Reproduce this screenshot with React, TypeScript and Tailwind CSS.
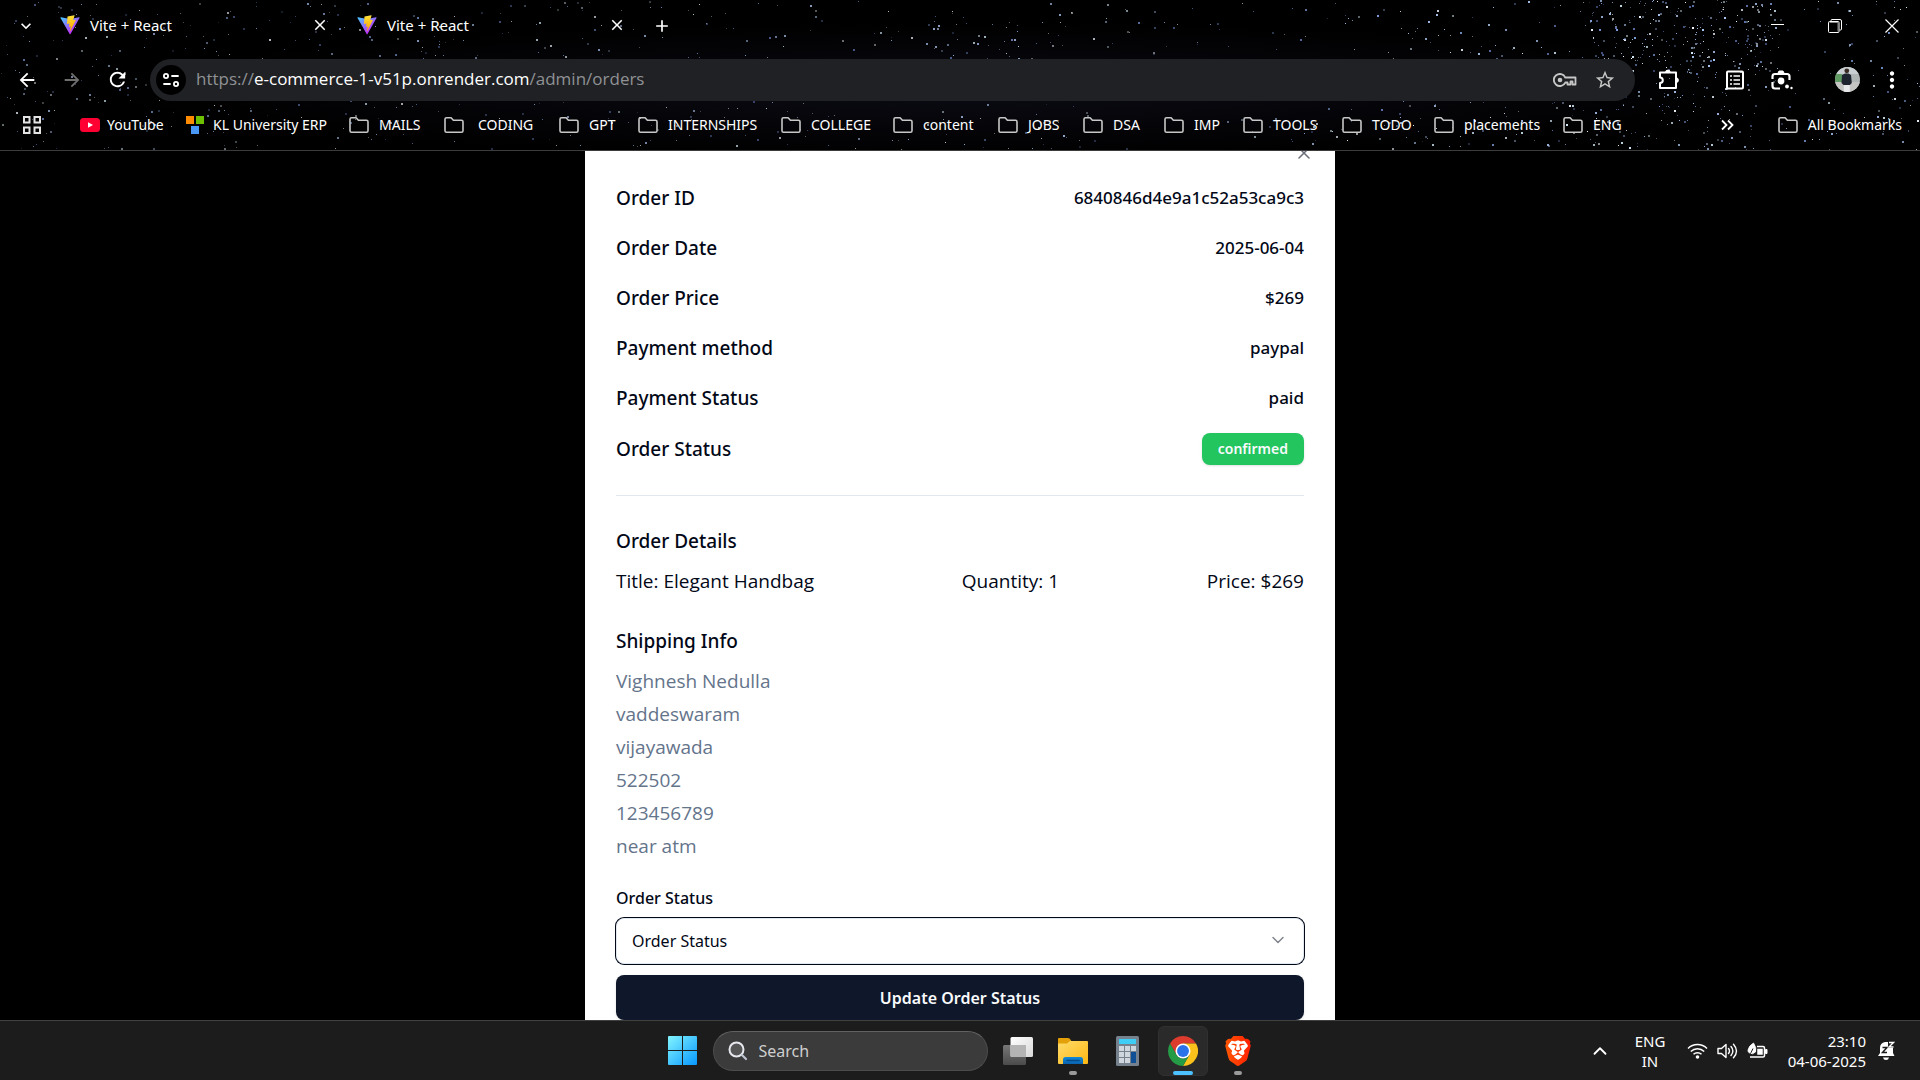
import React from "react";
import { ChevronDown, ChevronUp, X } from "lucide-react";
import { MdOutlineStarBorder, MdMoreVert, MdArrowBack, MdArrowForward, MdClose, MdAdd, MdKeyboardArrowDown, MdRefresh } from "react-icons/md";
import { SiBrave } from "react-icons/si";

type Star = { x: number; y: number; s: number; c: string; o: number };

function makeStars(): Star[] {
  let seed = 90210;
  const rnd = () => {
    seed = (seed * 1664525 + 1013904223) % 4294967296;
    return seed / 4294967296;
  };
  const tones = ["#7c9bd6", "#a9c4ee", "#eef6ff", "#5a6fa6", "#9fb9dc", "#cfe6f2"];
  const stars: Star[] = [];
  const scatter = (n: number, x0: number, x1: number, y0: number, y1: number, bright: number) => {
    for (let i = 0; i < n; i++) {
      stars.push({
        x: Math.round(x0 + rnd() * (x1 - x0)),
        y: Math.round(y0 + rnd() * (y1 - y0)),
        s: rnd() > 0.55 ? 2 : 1,
        c: tones[Math.floor(rnd() * tones.length)],
        o: Math.min(1, bright * (0.3 + rnd() * 0.7)),
      });
    }
  };
  scatter(400, 0, 660, 0, 150, 0.75);
  scatter(220, 660, 1300, 0, 150, 0.85);
  scatter(40, 920, 1060, 10, 60, 1);
  scatter(420, 1300, 1920, 0, 150, 1);
  scatter(210, 1590, 1780, 0, 70, 1.1);
  scatter(140, 1500, 1760, 50, 150, 1);
  return stars;
}

const STARS = makeStars();

function Sky() {
  return (
    <svg className="absolute inset-0 h-full w-full" viewBox="0 0 1920 150" preserveAspectRatio="xMidYMid slice" aria-hidden="true">
      <defs>
        <radialGradient id="haze" cx="0.5" cy="0.6" r="0.45">
          <stop offset="0" stopColor="#0b0b14" />
          <stop offset="1" stopColor="#000000" />
        </radialGradient>
      </defs>
      <rect width="1920" height="150" fill="url(#haze)" />
      {STARS.map((s, i) => (
        <rect key={i} x={s.x} y={s.y} width={s.s} height={s.s} fill={s.c} opacity={s.o} />
      ))}
    </svg>
  );
}

function ViteLogo() {
  return (
    <svg className="h-5 w-5 shrink-0" viewBox="0 0 410 404" aria-hidden="true">
      <defs>
        <linearGradient id="viteBody" x1="6" y1="33" x2="235" y2="344" gradientUnits="userSpaceOnUse">
          <stop stopColor="#41D1FF" />
          <stop offset="1" stopColor="#BD34FE" />
        </linearGradient>
        <linearGradient id="viteBolt" x1="194" y1="9" x2="236" y2="293" gradientUnits="userSpaceOnUse">
          <stop stopColor="#FFEA83" />
          <stop offset="0.083" stopColor="#FFDD35" />
          <stop offset="1" stopColor="#FFA800" />
        </linearGradient>
      </defs>
      <path fill="url(#viteBody)" d="M399.641 59.5246L215.643 388.545C211.844 395.338 202.084 395.378 198.228 388.618L10.5817 59.5563C6.38087 52.1896 12.6802 43.2665 21.0281 44.7586L205.223 77.6824C206.398 77.8924 207.601 77.8904 208.776 77.6763L389.119 44.8058C397.439 43.2894 403.768 52.1434 399.641 59.5246Z" />
      <path fill="url(#viteBolt)" d="M292.965 1.5744L156.801 28.2552C154.563 28.6937 152.906 30.5903 152.771 32.8664L144.395 174.33C144.198 177.662 147.258 180.248 150.51 179.498L188.42 170.749C191.967 169.931 195.172 173.055 194.443 176.622L183.18 231.775C182.422 235.487 185.907 238.661 189.532 237.56L212.947 230.446C216.577 229.344 220.065 232.527 219.297 236.242L201.398 322.875C200.278 328.294 207.486 331.249 210.492 326.603L212.5 323.5L323.454 102.072C325.312 98.3645 322.108 94.137 318.036 94.9228L279.014 102.454C275.347 103.161 272.227 99.746 273.262 96.1583L298.731 7.86689C299.767 4.27314 296.636 0.855181 292.965 1.5744Z" />
    </svg>
  );
}

function FolderOutline() {
  return (
    <svg className="h-5 w-5 shrink-0" viewBox="0 0 20 20" fill="none" stroke="#c7c7c7" strokeWidth="1.6" strokeLinejoin="round" aria-hidden="true">
      <path d="M1 4.200c0-.9.6-1.500 1.500-1.500h4.600l2.300 2.600h8.100c.9 0 1.500.6 1.500 1.500v8.900c0 .9-.6 1.500-1.500 1.500h-15c-.9 0-1.500-.6-1.500-1.500z" />
    </svg>
  );
}

function YouTubeIcon() {
  return (
    <svg className="h-5 w-5 shrink-0" viewBox="0 0 20 20" aria-hidden="true">
      <rect x="0" y="3" width="20" height="14" rx="3.500" fill="#ff0033" />
      <path d="M8 7.200v5.600l5-2.800z" fill="#fff" />
    </svg>
  );
}

function ErpIcon() {
  return (
    <svg className="h-5 w-5 shrink-0" viewBox="0 0 20 20" aria-hidden="true">
      <rect x="0" y="1" width="8" height="8" fill="#ff8c00" />
      <rect x="10" y="1" width="8" height="8" fill="#6cc000" />
      <rect x="5" y="11" width="8" height="8" fill="#4a98f5" />
    </svg>
  );
}

function Tab({ title, className }: { title: string; className: string }) {
  return (
    <div className={"flex items-center " + className}>
      <ViteLogo />
      <span className="ml-2.5 flex-1 text-[15px]">{title}</span>
      <button aria-label="Close tab">
        <MdClose size={18} />
      </button>
    </div>
  );
}

const BOOKMARKS: { label: string; icon?: React.ReactNode; box: string; pad?: boolean }[] = [
  { label: "YouTube", icon: <YouTubeIcon />, box: "w-[106px]" },
  { label: "KL University ERP", icon: <ErpIcon />, box: "w-[163px]" },
  { label: "MAILS", box: "w-[95px]" },
  { label: "CODING", box: "w-[115px]", pad: true },
  { label: "GPT", box: "w-[79px]" },
  { label: "INTERNSHIPS", box: "w-[143px]" },
  { label: "COLLEGE", box: "w-[112px]" },
  { label: "content", box: "w-[105px]" },
  { label: "JOBS", box: "w-[85px]" },
  { label: "DSA", box: "w-[81px]" },
  { label: "IMP", box: "w-[79px]" },
  { label: "TOOLS", box: "w-[99px]" },
  { label: "TODO", box: "w-[92px]" },
  { label: "placements", box: "w-[129px]" },
  { label: "ENG", box: "w-[70px]" },
];

function BrowserHeader() {
  return (
    <header className="relative h-[151px] shrink-0 overflow-hidden border-b border-[#3c3c3c] bg-black text-sm text-white">
      <Sky />
      <div className="relative flex h-[51px] items-center pl-4">
        <button aria-label="Search tabs">
          <MdKeyboardArrowDown size={20} />
        </button>
        <Tab title="Vite + React" className="ml-6 w-[269px]" />
        <Tab title="Vite + React" className="ml-7 w-[269px]" />
        <button className="ml-[26px]" aria-label="New tab">
          <MdAdd size={20} />
        </button>
        <div className="ml-auto flex items-center">
          <button className="flex w-[57px] justify-center" aria-label="Minimize">
            <svg width="14" height="14" viewBox="0 0 14 14" stroke="#fff"><path d="M0 5.500h13" /></svg>
          </button>
          <button className="flex w-[57px] justify-center" aria-label="Restore">
            <svg width="14" height="14" viewBox="0 0 14 14" fill="none" stroke="#fff">
              <path d="M3 2.500V1.500q0-1 1-1h8q1.500 0 1.500 1.500v8q0 1-1 1h-1" />
              <rect x="0.500" y="2.500" width="10.500" height="11" rx="1" fill="#000" />
              <path d="M1.500 3.500h8.500v9" stroke="#8a8a8a" />
            </svg>
          </button>
          <button className="flex w-[57px] justify-center" aria-label="Close">
            <svg width="14" height="14" viewBox="0 0 14 14" stroke="#fff" strokeWidth="1.200"><path d="M.5.500l13 13M13.500.500l-13 13" /></svg>
          </button>
        </div>
      </div>

      <div className="relative flex h-[57px] items-center pl-4 pr-[15px]">
        <button className="w-[45px]" aria-label="Back"><MdArrowBack size={22} /></button>
        <button className="w-[45px] text-[#6f6f6f]" aria-label="Forward"><MdArrowForward size={22} /></button>
        <button className="w-11" aria-label="Reload"><MdRefresh size={23} /></button>
        <div className="flex h-[42px] flex-1 items-center rounded-full bg-[#202124] pl-1.5 pr-[19px]">
          <button className="flex h-[30px] w-[30px] items-center justify-center rounded-full bg-black" aria-label="View site information">
            <svg width="18" height="18" viewBox="0 0 18 18" fill="none" stroke="#fff" strokeWidth="1.800" strokeLinecap="round">
              <circle cx="4" cy="5" r="2.100" />
              <path d="M10 5h6M2 13h6" />
              <circle cx="14" cy="13" r="2.100" />
            </svg>
          </button>
          <div className="ml-2.5 flex-1 text-[17px] font-['Open_Sans',sans-serif] text-[#8f9195]">
            https://<span className="text-white">e-commerce-1-v51p.onrender.com</span>/admin/orders
          </div>
          <button className="mr-[17px]" aria-label="Saved passwords">
            <svg width="24" height="24" viewBox="0 0 24 24" fill="none" stroke="#c7c7c7" strokeWidth="1.800" strokeLinejoin="round">
              <path d="M12.300 9.500H22.500v7h-3v-3h-2v3h-3v-2h-2.200a6 6 0 1 1 0-5z" />
              <circle cx="7" cy="12" r="2.300" fill="#c7c7c7" stroke="none" />
            </svg>
          </button>
          <button aria-label="Bookmark this tab"><MdOutlineStarBorder size={22} className="text-[#c7c7c7]" /></button>
        </div>
        <button className="ml-[22px]" aria-label="Extensions">
          <svg width="24" height="24" viewBox="0 0 24 24" fill="none" stroke="#fff" strokeWidth="2" strokeLinejoin="round">
            <path d="M3 4.500h16V20H3v-5a2.800 2.800 0 0 0 0-5.600z" />
            <path d="M8.500 4.500a2.400 2.400 0 0 1 4.800 0zM19 9.800a2.400 2.400 0 0 1 0 4.800z" fill="#fff" strokeWidth="1" />
          </svg>
        </button>
        <button className="ml-[43px]" aria-label="Reading list">
          <svg width="22" height="22" viewBox="0 0 22 22" fill="none" stroke="#fff" strokeWidth="2">
            <rect x="3" y="2.500" width="16" height="17" rx="1" />
            <path d="M6 7h2M9.500 7H16M6 11h2M9.500 11H16M6 15h2M9.500 15H16" strokeWidth="1.700" />
          </svg>
        </button>
        <button className="ml-6" aria-label="Search with Lens">
          <svg width="23" height="22" viewBox="0 0 23 22" fill="none" stroke="#fff" strokeWidth="2.200">
            <path d="M2.500 10V7.500q0-2.500 2.500-2.500h12q2.500 0 2.500 2.500V11M2.500 13v4q0 2.500 2.500 2.500h5" />
            <path d="M8 4l1-2h4l1 2z" fill="#fff" strokeWidth="1" />
            <circle cx="11" cy="12" r="3.400" fill="#fff" stroke="none" />
            <circle cx="17" cy="17.500" r="1.900" fill="#fff" stroke="none" />
            <circle cx="21.500" cy="19" r="1.200" fill="#fff" stroke="none" />
          </svg>
        </button>
        <button className="ml-[42px]" aria-label="Profile">
          <svg width="25" height="25" viewBox="0 0 25 25">
            <clipPath id="face"><circle cx="12.500" cy="12.500" r="12.500" /></clipPath>
            <g clipPath="url(#face)">
              <rect width="25" height="25" fill="#aeb5b4" />
              <rect width="25" height="7" fill="#c9ced2" />
              <path d="M0 7h7v8H0z" fill="#5f9a63" />
              <rect y="15" width="25" height="10" fill="#c4c4c2" />
              <path d="M7 8l3-1.500h3.500l2.500 1.500.8 8-2 2H8.500l-2-2z" fill="#1d2430" />
              <path d="M8.800 18h6v7h-6z" fill="#e6e8ec" />
              <circle cx="11.800" cy="3.800" r="2.400" fill="#3a2b25" />
            </g>
          </svg>
        </button>
        <button className="ml-[19px]" aria-label="Menu"><MdMoreVert size={26} /></button>
      </div>

      <nav className="relative flex h-[34px] items-center pl-[23px] pr-[18px]">
        <button className="mr-[39px] shrink-0" aria-label="Apps">
          <svg width="18" height="18" viewBox="0 0 18 18" fill="none" stroke="#e3e3e3" strokeWidth="2">
            <rect x="1" y="1" width="5.500" height="5.500" />
            <rect x="11.500" y="1" width="5.500" height="5.500" />
            <rect x="1" y="11.500" width="5.500" height="5.500" />
            <rect x="11.500" y="11.500" width="5.500" height="5.500" />
          </svg>
        </button>
        {BOOKMARKS.map((b) => (
          <a key={b.label} href="#" className={"flex shrink-0 items-center whitespace-nowrap " + b.box}>
            {b.icon ?? <FolderOutline />}
            <span className={b.pad ? "ml-3.5" : b.icon ? "ml-[7px]" : "ml-2.5"}>{b.label}</span>
          </a>
        ))}
        <button className="ml-auto mr-11" aria-label="More bookmarks">
          <svg width="14" height="12" viewBox="0 0 14 12" fill="none" stroke="#fff" strokeWidth="1.800"><path d="M2 1.500L6.500 6 2 10.500M8 1.500L12.500 6 8 10.500" /></svg>
        </button>
        <a href="#" className="flex shrink-0 items-center whitespace-nowrap">
          <FolderOutline />
          <span className="ml-2.5">All Bookmarks</span>
        </a>
      </nav>
    </header>
  );
}

const ROWS: [string, string][] = [
  ["Order ID", "6840846d4e9a1c52a53ca9c3"],
  ["Order Date", "2025-06-04"],
  ["Order Price", "$269"],
  ["Payment method", "paypal"],
  ["Payment Status", "paid"],
];

const ADDRESS = ["Vighnesh Nedulla", "vaddeswaram", "vijayawada", "522502", "123456789", "near atm"];

function OrderDialog() {
  return (
    <section role="dialog" aria-label="Order details" className="relative w-full max-w-[750px] bg-white px-[31px] pt-8 text-[19px] leading-[30px] text-[#020817]">
      <button className="absolute -top-2 right-[21px] text-[#6b6f78]" aria-label="Close dialog">
        <X size={20} strokeWidth={1.8} />
      </button>
      <dl className="flex flex-col gap-5">
        {ROWS.map(([k, v]) => (
          <div key={k} className="flex items-center justify-between">
            <dt className="font-medium">{k}</dt>
            <dd className="text-[17px] leading-[30px] font-medium">{v}</dd>
          </div>
        ))}
        <div className="flex items-center justify-between">
          <dt className="font-medium">Order Status</dt>
          <dd className="flex h-8 items-center rounded-lg bg-[#22c55e] px-4 text-sm font-semibold text-slate-50 shadow-sm">confirmed</dd>
        </div>
      </dl>
      <hr className="mt-[30px] border-[#e2e8f0]" />

      <h2 className="mt-[30px] font-medium">Order Details</h2>
      <ul className="mt-2.5 font-['Open_Sans',sans-serif]">
        <li className="flex items-center justify-between">
          <span>Title: Elegant Handbag</span>
          <span>Quantity: 1</span>
          <span>Price: $269</span>
        </li>
      </ul>

      <h2 className="mt-[30px] font-medium">Shipping Info</h2>
      <div className="mt-2.5 flex flex-col gap-[3px] font-['Open_Sans',sans-serif] text-[#64748b]">
        {ADDRESS.map((line) => (
          <span key={line}>{line}</span>
        ))}
      </div>

      <form className="mt-[27px]" onSubmit={(e) => e.preventDefault()}>
        <label htmlFor="status" className="block text-base leading-5 font-medium">Order Status</label>
        <div className="relative mt-2.5">
          <select id="status" defaultValue="" className="block h-[46px] w-full appearance-none rounded-lg border border-[#e2e8f0] bg-white px-[15px] text-base ring-1 ring-[#020817] outline-none">
            <option value="">Order Status</option>
            <option value="confirmed">Confirmed</option>
            <option value="delivered">Delivered</option>
          </select>
          <ChevronDown size={20} strokeWidth={1.8} className="pointer-events-none absolute top-3 right-4 text-[#81858d]" />
        </div>
        <button type="submit" className="mt-[11px] block h-[45px] w-full rounded-lg bg-[#0f172a] text-base font-semibold text-slate-50 shadow">
          Update Order Status
        </button>
      </form>
    </section>
  );
}

function TaskButton({ label, active, open, children }: { label: string; active?: boolean; open?: boolean; children: React.ReactNode }) {
  return (
    <button
      aria-label={label}
      className={"relative flex h-[50px] w-[50px] items-center justify-center rounded-md " + (active ? "border border-[#303030] bg-[#2a2a2a]" : "")}
    >
      {children}
      {active && <span className="absolute bottom-0 h-1 w-5 rounded-full bg-[#4cc2ff]" />}
      {open && <span className="absolute bottom-px h-1 w-2 rounded-full bg-[#9a9a9a]" />}
    </button>
  );
}

function Taskbar() {
  return (
    <footer className="grid h-[60px] shrink-0 grid-cols-[1fr_auto_1fr] items-center border-t border-[#3f4042] bg-[#1c1c1c] text-white">
      <div />
      <div className="flex items-center gap-[5px]">
        <TaskButton label="Start">
          <svg width="29" height="29" viewBox="0 0 29 29">
            <defs>
              <linearGradient id="win" x1="0" y1="0" x2="29" y2="29" gradientUnits="userSpaceOnUse">
                <stop stopColor="#83f5ff" />
                <stop offset="1" stopColor="#0797ff" />
              </linearGradient>
            </defs>
            <path fill="url(#win)" d="M1 0h13v14H0V1q0-1 1-1zM15 0h13q1 0 1 1v13H15zM0 15h14v14H1q-1 0-1-1zM15 15h14v13q0 1-1 1H15z" />
          </svg>
        </TaskButton>
        <label className="flex h-10 w-[275px] items-center rounded-full border border-[#4c4c4c] border-t-[#616161] bg-[#3b3b3b] pl-3.5">
          <svg width="20" height="20" viewBox="0 0 20 20" fill="#555" stroke="#e6e8ee" strokeWidth="2" strokeLinecap="round">
            <circle cx="8.500" cy="8.500" r="7" />
            <path d="M14 14l4 4" stroke="#c0c6d4" strokeWidth="2.200" />
          </svg>
          <input type="text" placeholder="Search" aria-label="Search" className="ml-[11px] w-40 bg-transparent text-base outline-none placeholder:text-[#cfcfcf]" />
        </label>
        <TaskButton label="Task view">
          <svg width="30" height="28" viewBox="0 0 30 28">
            <defs>
              <linearGradient id="tv" x1="0" y1="0" x2="1" y2="1"><stop stopColor="#fff" /><stop offset="1" stopColor="#d9d9d9" /></linearGradient>
              <linearGradient id="tvb" x1="0" y1="0" x2="0" y2="1"><stop stopColor="#777" /><stop offset="1" stopColor="#4b4b4b" /></linearGradient>
            </defs>
            <rect x="0" y="8" width="23" height="20" rx="1.500" fill="url(#tvb)" />
            <rect x="7.500" y="0" width="22.500" height="20" rx="1.500" fill="url(#tv)" />
            <path d="M7.500 8H23v12H9q-1.500 0-1.500-1.500z" fill="#b4b4b4" />
          </svg>
        </TaskButton>
        <TaskButton label="File Explorer" open>
          <svg width="30" height="28" viewBox="0 0 30 28">
            <defs>
              <linearGradient id="fe" x1="0" y1="0" x2="1" y2="1"><stop stopColor="#ffdb6b" /><stop offset="1" stopColor="#fcb813" /></linearGradient>
              <linearGradient id="feb" x1="0" y1="0" x2="0" y2="1"><stop stopColor="#0f8ad8" /><stop offset="1" stopColor="#0b62ae" /></linearGradient>
            </defs>
            <path d="M0 2q0-1 1-1h9q1 0 2 1l2 3v4H0z" fill="#e3a008" />
            <path d="M0 6.500h9l3-2.500h17q1 0 1 1v21q0 1-1 1H1q-1 0-1-1z" fill="url(#fe)" />
            <path d="M5 27v-4.500q0-2.500 2.500-2.500h15q2.500 0 2.500 2.500V27z" fill="url(#feb)" />
            <path d="M9 23.500h12" stroke="#064a8c" strokeWidth="1.500" strokeLinecap="round" />
          </svg>
        </TaskButton>
        <TaskButton label="Calculator">
          <svg width="23" height="30" viewBox="0 0 23 30">
            <rect width="23" height="30" rx="1.500" fill="#75818c" />
            <rect x="3" y="3" width="17" height="5" fill="#3ecdf5" />
            <path d="M3 10h5v5H3zM9 10h5v5H9zM15 10h5v5h-5zM3 16h5v5H3zM9 16h5v5H9zM3 22h5v5H3zM9 22h5v5H9z" fill="#cfd6dd" />
            <rect x="15" y="16" width="5" height="11" fill="#0f4f96" />
          </svg>
        </TaskButton>
        <TaskButton label="Google Chrome" active>
          <svg width="30" height="30" viewBox="0 0 48 48">
            <path fill="#dc3b2e" d="M24 12h20.780a24 24 0 0 0-41.570.003L13.610 30l10.390-18z" />
            <path fill="#fbc21b" d="M34.390 30.010L24 48A24 24 0 0 0 44.790 12H24z" />
            <path fill="#259b46" d="M13.610 30.010L3.220 12.010A24 24 0 0 0 24.010 48L34.400 30.010a12 12 0 0 1-20.790 0z" />
            <circle cx="24" cy="24" r="12" fill="#fff" />
            <circle cx="24" cy="24" r="9.500" fill="#2a72ea" />
          </svg>
        </TaskButton>
        <TaskButton label="Brave" open>
          <svg width="30" height="30" viewBox="0 0 30 30">
            <defs>
              <linearGradient id="brave" x1="0" y1="0" x2="1" y2="0"><stop stopColor="#ff5601" /><stop offset="1" stopColor="#ff1f01" /></linearGradient>
            </defs>
            <path d="M9 3.500h12l5.500 6.500-3 12-8.500 4.500-8.500-4.500-3-12z" fill="#fff" />
            <SiBrave size={30} fill="url(#brave)" stroke="none" />
          </svg>
        </TaskButton>
      </div>

      <div className="flex items-center justify-end pr-[25px] text-sm leading-5">
        <button aria-label="Show hidden icons"><ChevronUp size={22} strokeWidth={2} /></button>
        <button className="ml-[22px] w-[34px] text-center text-[15px] leading-5">ENG<br />IN</button>
        <button className="ml-5 flex items-center gap-[9px]" aria-label="Network, volume, battery">
          <svg width="21" height="18" viewBox="0 0 21 18" fill="none" stroke="#fff" strokeWidth="1.500">
            <path d="M1 6.500a13.500 13.500 0 0 1 19 0M3.800 9.500a9.500 9.500 0 0 1 13.400 0M6.500 12.300a5.700 5.700 0 0 1 8 0" />
            <circle cx="10.500" cy="15" r="1.800" fill="#fff" stroke="none" />
          </svg>
          <svg width="21" height="18" viewBox="0 0 21 18" fill="none" stroke="#fff" strokeWidth="1.400" strokeLinejoin="round" strokeLinecap="round">
            <path d="M1 6.500h3.500L9 2.500v13L4.500 11.500H1zM11.500 6.500q2 2.500 0 5M14 4.500q3.800 4.500 0 9M16.500 2.200q6 6.800 0 13.600" />
          </svg>
          <svg width="21" height="18" viewBox="0 0 21 18" fill="none" stroke="#fff" strokeWidth="1.500">
            <path d="M10 4.500h6q1.500 0 1.500 1.500v7.500q0 1.500-1.500 1.500H3" />
            <path d="M18.500 7.500h1.500v4h-1.500z" fill="#fff" strokeWidth="1" />
            <path d="M11 7.500h4v4.500h-4z" fill="#fff" />
            <path d="M1 8Q2 3.500 6.500 1q3.500 5 2 9-3 3-6 1Q.5 10 1 8z" fill="#fff" strokeWidth="0.800" />
            <path d="M1 14Q4.500 11 6 6.500" stroke="#1c1c1c" strokeWidth="1" />
          </svg>
        </button>
        <button className="ml-[18px] w-20 text-right text-[15px] leading-5 whitespace-nowrap">23:10<br />04-06-2025</button>
        <button className="ml-[11px]" aria-label="Notifications">
          <svg width="18" height="20" viewBox="0 0 18 20">
            <path d="M1 15l2-3V7q0-5 5-6h3q5 1 5 6v5l1.500 3z" fill="#fff" />
            <path d="M6 16.500h6q-.5 2.500-3 2.500t-3-2.500z" fill="#fff" />
            <path d="M5.500 6.500h4.500l-4.500 5h4.500" fill="none" stroke="#1c1c1c" strokeWidth="1.500" />
            <path d="M11 .5h6v6.500h-6z" fill="#1c1c1c" />
            <path d="M12 1.500h4.500l-4.500 4.500h4.500" fill="none" stroke="#fff" strokeWidth="1.400" />
          </svg>
        </button>
      </div>
    </footer>
  );
}

export default function App() {
  return (
    <div className="flex h-screen flex-col overflow-hidden bg-black font-['Noto_Sans','Open_Sans',sans-serif]">
      <BrowserHeader />
      <main className="flex min-h-0 flex-1 items-start justify-center overflow-hidden">
        <OrderDialog />
      </main>
      <Taskbar />
    </div>
  );
}
